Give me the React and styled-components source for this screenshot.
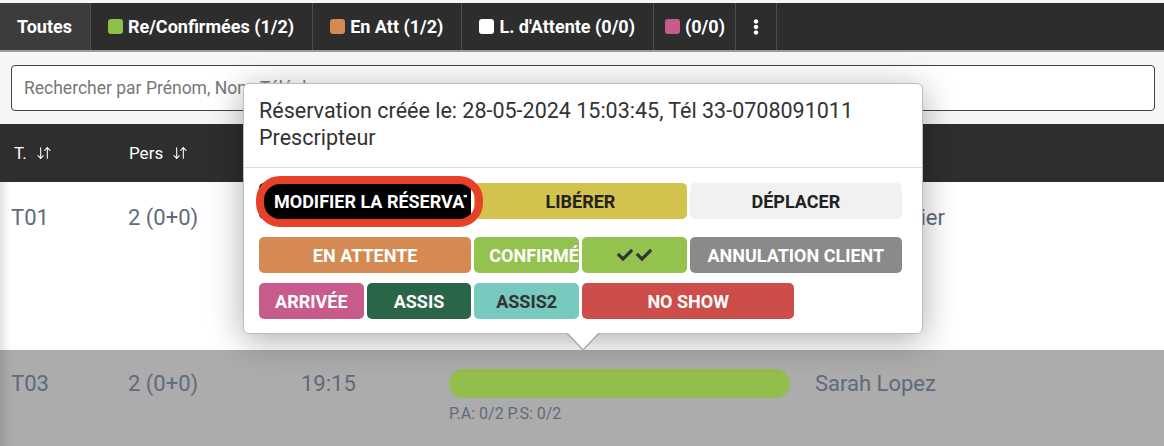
import React from 'react';
import styled, { createGlobalStyle } from 'styled-components';
import { ArrowDownUp } from 'lucide-react';
import { FaCheck, FaEllipsisV } from 'react-icons/fa';

const GlobalStyle = createGlobalStyle`
  html, body {
    margin: 0;
    padding: 0;
    background: #f6f6f6;
    font-family: Roboto, "Liberation Sans", sans-serif;
  }
  * { box-sizing: border-box; }
`;

const Page = styled.div`
  position: relative;
  width: 1164px;
  height: 446px;
  overflow: hidden;
  padding-top: 3px;
  background: #f6f6f6;
`;

const TabBar = styled.div`
  display: flex;
  height: 49px;
  background: #2d2d2d;
  border-bottom: 2px solid #9c9c9c;
`;

const Tab = styled.div`
  display: flex;
  align-items: center;
  gap: 5px;
  padding: ${(p) => p.$pad || '0 18px 0 17px'};
  background: ${(p) => (p.$active ? '#3c3c3c' : 'transparent')};
  border-right: 1px solid #4e4e4e;
  color: #fff;
  font-size: 18px;
  font-weight: 700;
  white-space: nowrap;
`;

const Swatch = styled.span`
  width: 15px;
  height: 15px;
  border-radius: 3px;
  background: ${(p) => p.$color};
`;

const SearchWrap = styled.div`
  padding: 13px 9px 13px 11px;
`;

const SearchInput = styled.input`
  display: block;
  width: 100%;
  height: 46px;
  padding: 0 12px;
  border: 1px solid #444;
  border-radius: 4px;
  background: #fff;
  font-family: Roboto, "Liberation Sans", sans-serif;
  font-size: 17.5px;
  color: #333;
  &::placeholder { color: #777; }
`;

const columns = '117px 173px 148px 366px 1fr';

const HeadRow = styled.div`
  display: grid;
  grid-template-columns: ${columns};
  align-items: center;
  height: 58px;
  padding-left: 14px;
  background: #2e2e2e;
  color: #fff;
  font-size: 17px;
`;

const HeadCell = styled.div`
  display: flex;
  align-items: center;
  gap: 9px;
  margin-left: ${(p) => p.$shift || 0}px;
`;

const Row = styled.div`
  display: grid;
  grid-template-columns: ${columns};
  align-items: start;
  min-height: ${(p) => p.$height}px;
  padding: ${(p) => p.$top}px 0 0 11px;
  background: ${(p) => (p.$dim ? '#acacac' : '#fff')};
  box-shadow: inset 12px 0 10px -8px rgba(0, 0, 0, 0.14);
  color: #5f6b7a;
  font-size: 22px;
`;

const Cell = styled.div`
  line-height: 29px;
  white-space: nowrap;
  margin-left: ${(p) => p.$shift || 0}px;
`;

const Bar = styled.div`
  width: 341px;
  height: 29px;
  border-radius: 15px;
  background: #93bd4c;
`;

const Meta = styled.div`
  margin-top: 6px;
  font-size: 16px;
  line-height: 19px;
  color: #5f6b7a;
`;

const Popover = styled.div`
  position: absolute;
  left: 243px;
  top: 83px;
  width: 680px;
  background: #fff;
  border: 1px solid #bdbdbd;
  border-radius: 6px;
  box-shadow: 0 6px 34px rgba(0, 0, 0, 0.33);

  &::before,
  &::after {
    content: '';
    position: absolute;
    left: 322px;
    border-style: solid;
    border-color: transparent;
  }
  &::before {
    bottom: -18px;
    border-width: 18px 17px 0;
    border-top-color: #a8a8a8;
  }
  &::after {
    bottom: -16px;
    left: 323px;
    border-width: 17px 16px 0;
    border-top-color: #fff;
  }
`;

const PopHeader = styled.div`
  padding: 13px 15px 16px;
  border-bottom: 1px solid #dcdcdc;
  color: #333;
  font-size: 21.5px;
  line-height: 27px;
  white-space: nowrap;
`;

const PopBody = styled.div`
  display: flex;
  flex-direction: column;
  gap: 10px;
  padding: 15px 20px 14px 15px;
`;

const ActionRow = styled.div`
  display: grid;
  grid-template-columns: repeat(6, 1fr);
  gap: 3px;
  margin-bottom: ${(p) => (p.$spaced ? 8 : 0)}px;
`;

const Action = styled.div`
  grid-column: span ${(p) => p.$span || 1};
  display: flex;
  align-items: center;
  justify-content: ${(p) => (p.$clip ? 'flex-start' : 'center')};
  gap: 3px;
  height: 36px;
  padding: 0 ${(p) => (p.$clip ? '0 0 15px' : '8px')};
  border-radius: 5px;
  overflow: hidden;
  background: ${(p) => p.$bg};
  color: ${(p) => p.$fg || '#fff'};
  font-size: 18px;
  font-weight: 700;
  white-space: nowrap;
`;

const Highlighted = styled.div`
  position: relative;
  grid-column: span 2;
  display: flex;
  align-items: center;
  height: 36px;
  padding: 0 4px 0 15px;
  border-radius: 5px;
  background: #000;
  color: #fff;
  font-size: 18px;
  font-weight: 700;
  white-space: nowrap;

  span {
    display: block;
    overflow: hidden;
  }

  &::after {
    content: '';
    position: absolute;
    left: -3px;
    right: -12px;
    top: -7px;
    bottom: -8px;
    border: 8px solid #e8412a;
    border-radius: 24px;
  }
`;

const tabs = [
  { label: 'Re/Confirmées (1/2)', color: '#8dc14c' },
  { label: 'En Att (1/2)', color: '#d48a52' },
  { label: "L. d'Attente (0/0)", color: '#ffffff' },
  { label: '(0/0)', color: '#c75b8c', pad: '0 10px 0 11px' },
];

export default function App() {
  return (
    <>
      <GlobalStyle />
      <Page>
        <TabBar>
          <Tab $active>Toutes</Tab>
          {tabs.map((t) => (
            <Tab key={t.label} $pad={t.pad}>
              <Swatch $color={t.color} />
              {t.label}
            </Tab>
          ))}
          <Tab $pad="0 12px 0 12px">
            <FaEllipsisV size={16} />
          </Tab>
        </TabBar>

        <SearchWrap>
          <SearchInput placeholder="Rechercher par Prénom, Nom, Téléphone..." />
        </SearchWrap>

        <HeadRow>
          <HeadCell>
            T. <ArrowDownUp size={16} strokeWidth={1.6} />
          </HeadCell>
          <HeadCell $shift={-2}>
            Pers <ArrowDownUp size={16} strokeWidth={1.6} />
          </HeadCell>
        </HeadRow>

        <div>
          <Row $height={168} $top={21}>
            <Cell>T01</Cell>
            <Cell>2 (0+0)</Cell>
            <Cell>19:00</Cell>
            <div>
              <Bar />
              <Meta>P.A: 0/2 P.S: 0/2</Meta>
            </div>
            <Cell $shift={-8}>Lucas Mercier</Cell>
          </Row>
          <Row $height={96} $top={19} $dim>
            <Cell>T03</Cell>
            <Cell>2 (0+0)</Cell>
            <Cell>19:15</Cell>
            <div>
              <Bar />
              <Meta>P.A: 0/2 P.S: 0/2</Meta>
            </div>
            <Cell>Sarah Lopez</Cell>
          </Row>
        </div>

        <Popover>
          <PopHeader>
            Réservation créée le: 28-05-2024 15:03:45, Tél 33-0708091011
            <br />
            Prescripteur
          </PopHeader>
          <PopBody>
            <ActionRow $spaced>
              <Highlighted>
                <span>MODIFIER LA RÉSERVATION</span>
              </Highlighted>
              <Action $span={2} $bg="#d3c24e" $fg="#222">LIBÉRER</Action>
              <Action $span={2} $bg="#f1f1f1" $fg="#222">DÉPLACER</Action>
            </ActionRow>
            <ActionRow>
              <Action $span={2} $bg="#d48a52">EN ATTENTE</Action>
              <Action $bg="#94c24f" $clip>
                <span>CONFIRMÉ</span>
              </Action>
              <Action $bg="#94c24f" $fg="#333">
                <FaCheck size={16} />
                <FaCheck size={16} />
              </Action>
              <Action $span={2} $bg="#8a8a8a">ANNULATION CLIENT</Action>
            </ActionRow>
            <ActionRow>
              <Action $bg="#c75b8c">ARRIVÉE</Action>
              <Action $bg="#2b6548">ASSIS</Action>
              <Action $bg="#78c9be" $fg="#333">ASSIS2</Action>
              <Action $span={2} $bg="#cc4d49">NO SHOW</Action>
            </ActionRow>
          </PopBody>
        </Popover>
      </Page>
    </>
  );
}
